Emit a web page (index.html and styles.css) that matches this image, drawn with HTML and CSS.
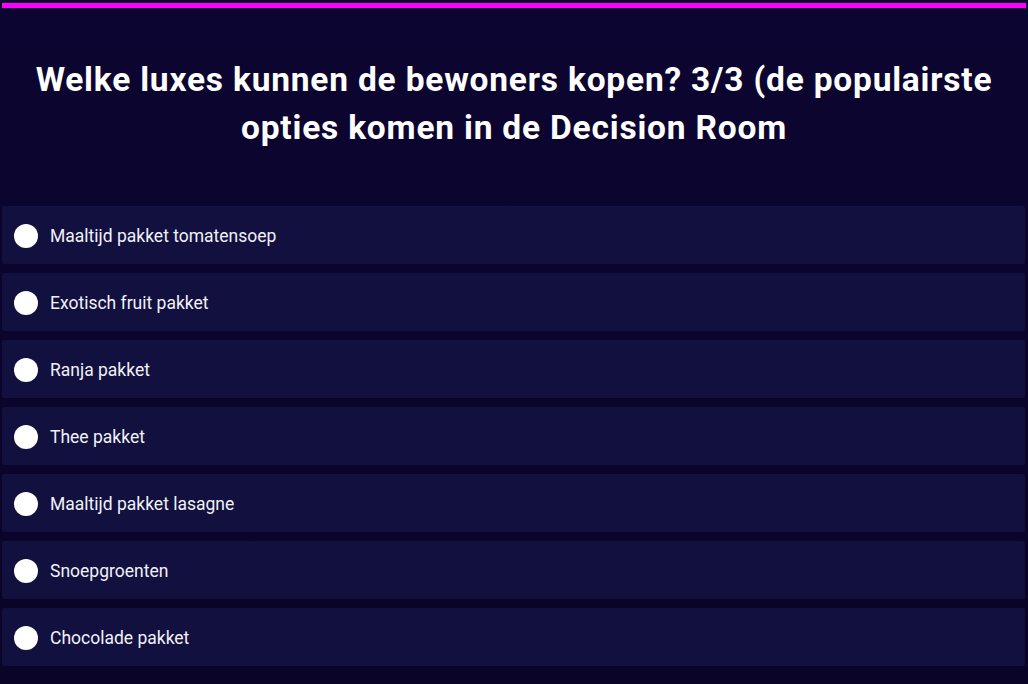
FILE: index.html
```html
<!DOCTYPE html>
<html lang="nl">
  <head>
    <meta charset="UTF-8" />
    <meta name="viewport" content="width=device-width, initial-scale=1.0" />
    <title>Luxes</title>
    <link rel="stylesheet" href="styles.css">
  </head>
  <body>
    <div class="screen">
      <div class="top-bar"></div>

      <h1 class="question">Welke luxes kunnen de bewoners kopen? 3/3 (de populairste opties komen in de Decision Room</h1>

      <ul class="options">
        <li class="option"><span class="dot"></span>Maaltijd pakket tomatensoep</li>
        <li class="option"><span class="dot"></span>Exotisch fruit pakket</li>
        <li class="option"><span class="dot"></span>Ranja pakket</li>
        <li class="option"><span class="dot"></span>Thee pakket</li>
        <li class="option"><span class="dot"></span>Maaltijd pakket lasagne</li>
        <li class="option"><span class="dot"></span>Snoepgroenten</li>
        <li class="option"><span class="dot"></span>Chocolade pakket</li>
      </ul>
    </div>
  </body>
</html>
```

FILE: styles.css
```css
html,
body {
  margin: 0;
  padding: 0;
  height: 100%;
}

body {
  font-family: "Roboto", "Liberation Sans", sans-serif;
  background: linear-gradient(#0c0531, #0a0428);
  color: #ffffff;
}

.screen {
  padding: 3px 2px 0;
}

.top-bar {
  height: 5px;
  background-color: #ff00ff;
}

.question {
  margin: 0;
  padding: 48px 20px 0;
  height: 145px;
  box-sizing: border-box;
  text-align: center;
  font-size: 33.5px;
  line-height: 48px;
  font-weight: 700;
  letter-spacing: 0.8px;
}

.options {
  list-style: none;
  margin: 53px 0 0;
  padding: 0;
  display: flex;
  flex-direction: column;
  gap: 9px;
}

.option {
  display: flex;
  align-items: center;
  gap: 12px;
  height: 58px;
  padding: 1px 12px 0;
  box-sizing: border-box;
  background-color: #11103e;
  border-radius: 2px;
  font-size: 17.5px;
  color: #f2f1f8;
  margin-right: 1px;
}

.dot {
  width: 24px;
  height: 24px;
  border-radius: 50%;
  background-color: #ffffff;
  flex-shrink: 0;
}
```
